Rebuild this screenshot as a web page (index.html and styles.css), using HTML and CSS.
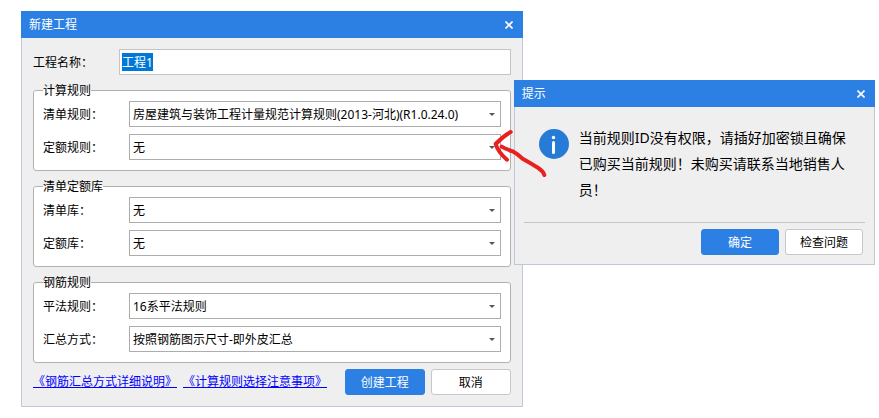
FILE: index.html
```
<!DOCTYPE html>
<html lang="zh-CN">

<head>
  <meta charset="UTF-8">
  <meta name="viewport" content="width=device-width, initial-scale=1.0">
  <title>新建工程</title>
  <link rel="stylesheet" href="styles.css">
</head>

<body>
  <div class="desktop">
    <form class="window project">
      <div class="title-bar">
        <h1 class="title">新建工程</h1>
        <button class="close" type="button" aria-label="关闭">
          <svg width="8" height="8" viewBox="0 0 8 8"><path d="M0.5 0.5L7.5 7.5M7.5 0.5L0.5 7.5"/></svg>
        </button>
      </div>
      <div class="project-body">
        <div class="name-row">
          <label for="projectName">工程名称：</label>
          <input class="name-input" type="text" id="projectName" value="工程1">
        </div>
        <fieldset class="group">
          <legend>计算规则</legend>
          <div class="row">
            <label for="billRule">清单规则：</label>
            <div class="select">
              <select id="billRule">
                <option>房屋建筑与装饰工程计量规范计算规则(2013-河北)(R1.0.24.0)</option>
              </select>
            </div>
          </div>
          <div class="row">
            <label for="quotaRule">定额规则：</label>
            <div class="select">
              <select id="quotaRule">
                <option>无</option>
              </select>
            </div>
          </div>
        </fieldset>
        <fieldset class="group">
          <legend>清单定额库</legend>
          <div class="row">
            <label for="billLib">清单库：</label>
            <div class="select">
              <select id="billLib">
                <option>无</option>
              </select>
            </div>
          </div>
          <div class="row">
            <label for="quotaLib">定额库：</label>
            <div class="select">
              <select id="quotaLib">
                <option>无</option>
              </select>
            </div>
          </div>
        </fieldset>
        <fieldset class="group">
          <legend>钢筋规则</legend>
          <div class="row">
            <label for="rebarRule">平法规则：</label>
            <div class="select">
              <select id="rebarRule">
                <option>16系平法规则</option>
              </select>
            </div>
          </div>
          <div class="row">
            <label for="sumMode">汇总方式：</label>
            <div class="select">
              <select id="sumMode">
                <option>按照钢筋图示尺寸-即外皮汇总</option>
              </select>
            </div>
          </div>
        </fieldset>
        <div class="project-footer">
          <div class="links">
            <a href="#rebar">《钢筋汇总方式详细说明》</a>
            <a href="#rules">《计算规则选择注意事项》</a>
          </div>
          <button class="btn btn-primary" type="submit">创建工程</button>
          <button class="btn" type="button">取消</button>
        </div>
      </div>
    </form>

    <div class="window prompt" role="dialog" aria-labelledby="promptTitle">
      <div class="title-bar">
        <h2 class="title" id="promptTitle">提示</h2>
        <button class="close" type="button" aria-label="关闭">
          <svg width="8" height="8" viewBox="0 0 8 8"><path d="M0.5 0.5L7.5 7.5M7.5 0.5L0.5 7.5"/></svg>
        </button>
      </div>
      <div class="message">
        <svg class="info" width="30" height="30" viewBox="0 0 30 30">
          <circle cx="15" cy="15" r="15" fill="#267bd6"/>
          <circle cx="14.5" cy="8.5" r="1.7" fill="#fff"/>
          <path d="M14.5 13.5V23.5" stroke="#fff" stroke-width="3" stroke-linecap="round"/>
        </svg>
        <p>当前规则ID没有权限，请插好加密锁且确保已购买当前规则！未购买请联系当地销售人员！</p>
      </div>
      <div class="prompt-footer">
        <button class="btn btn-primary" type="button">确定</button>
        <button class="btn" type="button">检查问题</button>
      </div>
      <!-- hand-drawn arrow to the quota rule list -->
      <svg class="arrow" width="60" height="55" viewBox="30 51 180 165">
        <path d="M92 66Q70 78 47 102Q54 126 81 149"/>
        <path d="M65 110Q78 118 98 124Q112 132 128 146Q150 158 175 174Q190 184 193 195"/>
      </svg>
    </div>
  </div>

  <script>
    var nameInput = document.getElementById('projectName');
    nameInput.focus();
    nameInput.select();
  </script>
</body>

</html>
```
FILE: styles.css
```
* {
  box-sizing: border-box;
}

body {
  margin: 0;
  background-color: #fff;
  color: #000;
  font-family: "Noto Sans", "Noto Sans CJK SC", sans-serif;
  font-size: 12px;
  line-height: 16px;
}

input,
select,
button {
  font: inherit;
  color: inherit;
}

.desktop {
  display: flex;
  align-items: flex-start;
  padding: 11px 4px 11px 21px;
}

.window {
  min-width: 0;
  background-color: #efefef;
  border: 1px solid #c0c8d8;
  border-top: none;
}

.project {
  flex: 502 1 0;
}

.prompt {
  position: relative;
  flex: 361 1 0;
  margin-top: 69px;
  margin-left: -9px;
}

.title-bar {
  display: flex;
  align-items: center;
  justify-content: space-between;
  height: 27px;
  margin: 0 -1px;
  padding: 0 9px 0 8px;
  background-color: #2d80e3;
  color: #fff;
}

.title {
  margin: 0;
  font-size: 12px;
  font-weight: normal;
}

.close {
  display: flex;
  padding: 1px;
  border: none;
  background: none;
  cursor: pointer;
}

.close path {
  stroke: #fff;
  stroke-width: 1.6;
}

.project-body {
  padding: 11px;
}

.name-row,
.row {
  display: flex;
  align-items: center;
}

label {
  width: 86px;
  padding-top: 2px;
}

.name-input {
  flex: 1;
  min-width: 0;
  height: 26px;
  padding: 0 2px;
  border: 1px solid #c4c4c4;
  border-radius: 0;
  background-color: #fff;
  outline: none;
}

.name-input::selection {
  background-color: #0078d7;
  color: #fff;
}

.group {
  min-width: 0;
  margin: 8px 0 0;
  padding: 3px 9px 10px;
  border: 1px solid #b0b0b0;
  border-radius: 3px;
  background-color: #fff;
}

.group legend {
  padding: 0;
  line-height: 15px;
}

.row + .row {
  margin-top: 7px;
}

.select {
  position: relative;
  flex: 1;
  min-width: 0;
}

.select select {
  display: block;
  width: 100%;
  height: 26px;
  padding: 2px 20px 0 3px;
  border: 1px solid #adadad;
  border-radius: 0;
  background-color: #fff;
  appearance: none;
}

.select::after {
  content: "";
  position: absolute;
  top: 12px;
  right: 6px;
  border: 3px solid transparent;
  border-top-color: #555;
  border-bottom: none;
  pointer-events: none;
}

.project-footer {
  display: flex;
  align-items: center;
  gap: 6px;
  margin-top: 6px;
}

.links {
  display: flex;
  flex: 1;
  gap: 6px;
  white-space: nowrap;
}

.links a {
  color: #0000ff;
}

.btn {
  width: 80px;
  height: 26px;
  padding: 2px 0 0;
  border: 1px solid #c8c8c8;
  border-radius: 3px;
  background-color: #fff;
  cursor: pointer;
}

.btn-primary {
  border-color: #2d80e3;
  background-color: #2d80e3;
  color: #fff;
}

.message {
  display: flex;
  gap: 10px;
  margin: 0 9px;
  padding: 18px 10px 19px 15px;
  border-bottom: 1px solid #c4c4c4;
}

.message p {
  margin: 0;
  font-size: 14px;
  line-height: 26px;
}

.info {
  flex: none;
  margin-top: 4px;
}

.prompt-footer {
  display: flex;
  justify-content: flex-end;
  gap: 6px;
  padding: 6px 11px 9px;
}

.prompt-footer .btn {
  width: 78px;
}

.arrow {
  position: absolute;
  top: 47px;
  left: -25px;
  fill: none;
  stroke: #e8201f;
  stroke-width: 12;
  stroke-linecap: round;
  stroke-linejoin: round;
}
```
